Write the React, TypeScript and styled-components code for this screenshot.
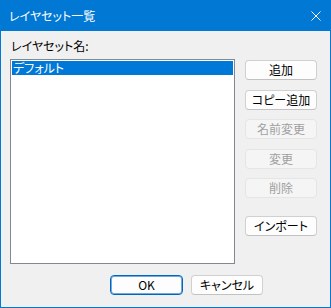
import React from "react";
import styled, { createGlobalStyle, css } from "styled-components";

const Global = createGlobalStyle`
  html, body { margin: 0; padding: 0; background: #f0f0f0; }
  body { font-family: "Noto Sans CJK JP", "Noto Sans", sans-serif; }
  * { box-sizing: border-box; }
`;

const Window = styled.div`
  width: 331px;
  height: 308px;
  border: 1px solid #0078d4;
  border-top: none;
  display: flex;
  flex-direction: column;
  background: #f0f0f0;
  font-family: "Noto Sans CJK JP", sans-serif;
  font-feature-settings: "palt";
  font-size: 12px;
  color: #000;
`;

const TitleBar = styled.div`
  height: 31px;
  background: #0078d4;
  color: #fff;
  display: flex;
  align-items: center;
  justify-content: space-between;
  padding: 0 9px 0 9px;
  margin: 0 -1px;
  font-size: 12px;
`;

const Title = styled.span`
  line-height: 16px;
  padding-top: 1px;
`;

const CloseIcon = styled.svg`
  width: 10px;
  height: 10px;
  margin-right: 1px;
`;

const Body = styled.div`
  flex: 1;
  display: flex;
  flex-direction: column;
  padding: 7px 0 0 9px;
`;

const Label = styled.div`
  height: 16px;
  line-height: 16px;
  margin: 0 0 5px 1px;
`;

const MainRow = styled.div`
  display: flex;
  gap: 10px;
`;

const ListBox = styled.div`
  width: 225px;
  height: 205px;
  border: 1px solid #828790;
  background: #fff;
  padding: 1px;
`;

const ListItem = styled.div<{ $selected?: boolean }>`
  height: 14px;
  line-height: 14px;
  padding-left: 1px;
  ${(p) =>
    p.$selected &&
    css`
      background: #0078d7;
      color: #fff;
    `}
`;

const ButtonColumn = styled.div`
  display: flex;
  flex-direction: column;
  padding-top: 1px;
`;

const Button = styled.button<{ $width?: number; $space?: number; $default?: boolean }>`
  width: ${(p) => p.$width ?? 72}px;
  height: 20px;
  margin-top: ${(p) => p.$space ?? 0}px;
  padding: 0;
  border: 1px solid #d0d0d0;
  border-bottom-color: #c2c2c2;
  border-radius: 4px;
  background: #fdfdfd;
  font-family: "Noto Sans CJK JP", sans-serif;
  font-feature-settings: "palt";
  font-size: 12px;
  line-height: 16px;
  color: #000;
  ${(p) =>
    p.$default &&
    css`
      border: 1px solid #0067c0;
      box-shadow: inset 0 0 0 1px rgba(0, 103, 192, 0.55);
    `}
  &:disabled {
    background: #f5f5f5;
    border-color: #e5e5e5;
    color: #a0a0a0;
  }
`;

const Footer = styled.div`
  display: flex;
  gap: 8px;
  padding: 11px 0 0 100px;
`;

export default function App() {
  return (
    <>
      <Global />
      <Window>
        <TitleBar>
          <Title>レイヤセット一覧</Title>
          <CloseIcon viewBox="0 0 10 10">
            <path d="M0.5 0.5 L9.5 9.5 M9.5 0.5 L0.5 9.5" stroke="#fff" strokeWidth="1" fill="none" />
          </CloseIcon>
        </TitleBar>
        <Body>
          <Label>レイヤセット名:</Label>
          <MainRow>
            <ListBox>
              <ListItem $selected>デフォルト</ListItem>
            </ListBox>
            <ButtonColumn>
              <Button>追加</Button>
              <Button $space={10}>コピー追加</Button>
              <Button $space={9} disabled>名前変更</Button>
              <Button $space={10} disabled>変更</Button>
              <Button $space={9} disabled>削除</Button>
              <Button $space={18}>インポート</Button>
            </ButtonColumn>
          </MainRow>
          <Footer>
            <Button $width={73} $default>OK</Button>
            <Button>キャンセル</Button>
          </Footer>
        </Body>
      </Window>
    </>
  );
}
